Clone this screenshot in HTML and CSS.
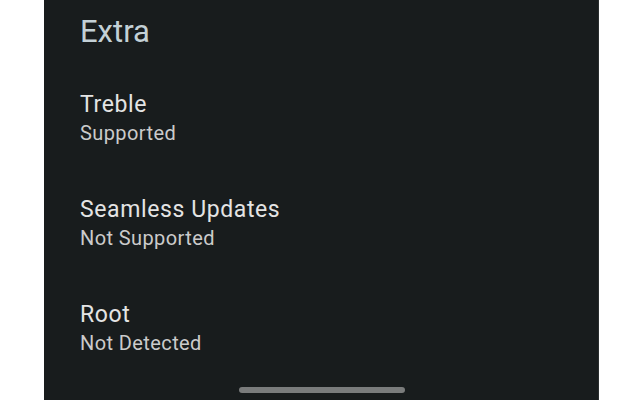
FILE: index.html
```html
<!DOCTYPE html>
<html lang="en">
  <head>
    <meta charset="UTF-8" />
    <meta name="viewport" content="width=device-width, initial-scale=1.0" />
    <title>Extra</title>
    <link rel="stylesheet" href="styles.css">
  </head>
  <body>
    <div class="screen">
      <h1 class="section-title">Extra</h1>

      <div class="pref-list">
        <div class="pref">
          <div class="pref-title">Treble</div>
          <div class="pref-summary">Supported</div>
        </div>
        <div class="pref">
          <div class="pref-title">Seamless Updates</div>
          <div class="pref-summary">Not Supported</div>
        </div>
        <div class="pref">
          <div class="pref-title">Root</div>
          <div class="pref-summary">Not Detected</div>
        </div>
      </div>

      <div class="nav-handle"></div>
    </div>
  </body>
</html>
```

FILE: styles.css
```css
* {
  margin: 0;
  padding: 0;
  box-sizing: border-box;
  font-family: Roboto, "Noto Sans", sans-serif;
}

body {
  background: #ffffff;
  height: 400px;
  overflow: hidden;
}

/* Phone screen */
.screen {
  position: relative;
  width: 555px;
  height: 400px;
  margin-left: 44px;
  padding: 12px 0 0 36px;
  background: #181c1d;
  border-right: 1px solid #2a2e2f;
}

.section-title {
  font-size: 31px;
  font-weight: 400;
  line-height: 40px;
  color: #c3d0d6;
  margin-bottom: 39px;
}

.pref-list {
  display: flex;
  flex-direction: column;
  gap: 49px;
}

.pref-title {
  font-size: 23px;
  line-height: 28px;
  letter-spacing: 0.6px;
  color: #e4e4e4;
}

.pref-summary {
  font-size: 20px;
  line-height: 28px;
  letter-spacing: 0.4px;
  color: #cbcbcb;
}

/* gesture bar */
.nav-handle {
  position: absolute;
  left: 195px;
  bottom: 7px;
  width: 166px;
  height: 6px;
  border-radius: 3px;
  background: #7a7c7c;
}
```
